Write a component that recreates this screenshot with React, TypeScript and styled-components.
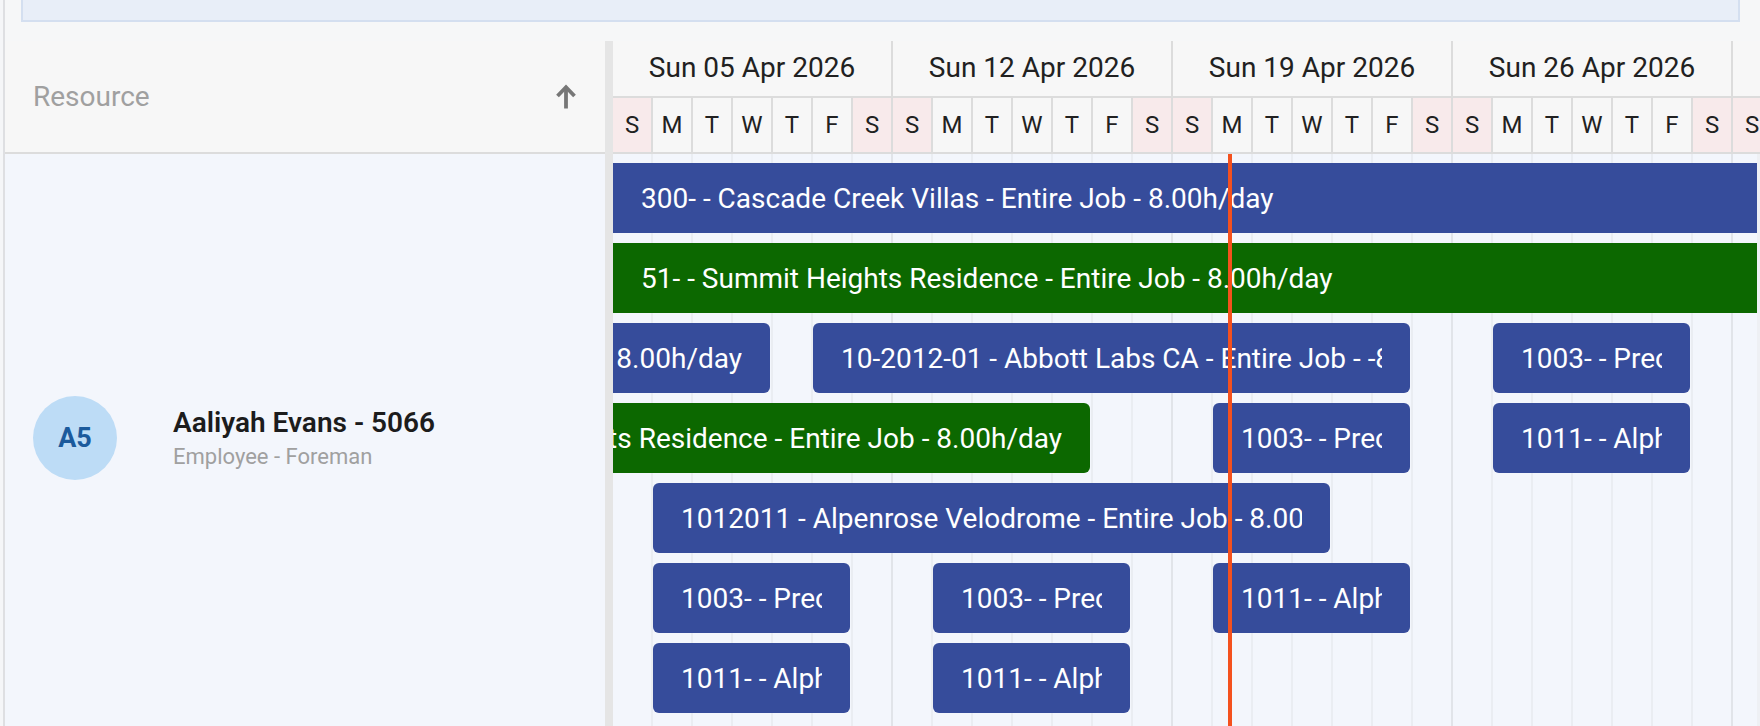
import React from 'react';
import styled, { createGlobalStyle } from 'styled-components';

const DAY_W = 40;
const VISIBLE_DAYS = 29;
const START = new Date(2026, 3, 5); // Sun 05 Apr 2026
const NOW_DAY = 15.38;

const DAY_NAMES = ['Sun', 'Mon', 'Tue', 'Wed', 'Thu', 'Fri', 'Sat'];
const MONTHS = ['Jan', 'Feb', 'Mar', 'Apr', 'May', 'Jun', 'Jul', 'Aug', 'Sep', 'Oct', 'Nov', 'Dec'];

type Bar = {
  from: number;
  to: number;
  label: string;
  color: 'blue' | 'green';
  align?: 'start' | 'end';
};

const PREC = '1003- - Precision Castparts - Entire Job - 8.00h/day';
const ALPH = '1011- - Alpha Tower - Entire Job - 8.00h/day';

const lanes: Bar[][] = [
  [{ from: -20, to: 40, label: '300- - Cascade Creek Villas - Entire Job - 8.00h/day', color: 'blue' }],
  [{ from: -20, to: 40, label: '51- - Summit Heights Residence - Entire Job - 8.00h/day', color: 'green' }],
  [
    { from: -4, to: 4, label: PREC, color: 'blue', align: 'end' },
    { from: 5, to: 20, label: '10-2012-01 - Abbott Labs CA - Entire Job - -8.00h/day', color: 'blue' },
    { from: 22, to: 27, label: PREC, color: 'blue' },
  ],
  [
    { from: -6, to: 12, label: '51- - Summit Heights Residence - Entire Job - 8.00h/day', color: 'green', align: 'end' },
    { from: 15, to: 20, label: PREC, color: 'blue' },
    { from: 22, to: 27, label: ALPH, color: 'blue' },
  ],
  [{ from: 1, to: 18, label: '1012011 - Alpenrose Velodrome - Entire Job - 8.00h/day', color: 'blue' }],
  [
    { from: 1, to: 6, label: PREC, color: 'blue' },
    { from: 8, to: 13, label: PREC, color: 'blue' },
    { from: 15, to: 20, label: ALPH, color: 'blue' },
  ],
  [
    { from: 1, to: 6, label: ALPH, color: 'blue' },
    { from: 8, to: 13, label: ALPH, color: 'blue' },
  ],
];

const GlobalStyle = createGlobalStyle`
  *, *::before, *::after { box-sizing: border-box; }
  html, body { margin: 0; padding: 0; }
  body {
    background: #f5f6f8;
    font-family: Roboto, 'Noto Sans', 'Liberation Sans', sans-serif;
    color: #212121;
    overflow: hidden;
  }
`;

const Frame = styled.div`
  display: flex;
  flex-direction: column;
  width: 1757px;
  height: 726px;
  margin-left: 3px;
  border-left: 2px solid #dedfe2;
  background: #f6f7f8;
  overflow: hidden;
`;

const Banner = styled.div`
  flex: 0 0 22px;
  margin: 0 20px 0 16px;
  background: #e8eef8;
  border: 2px solid #d4dff0;
  border-top: none;
`;

const Scheduler = styled.div`
  display: flex;
  flex: 1;
  min-height: 0;
  margin-top: 19px;
`;

const LeftPane = styled.div`
  display: flex;
  flex: 0 0 600px;
  flex-direction: column;
`;

const LeftHeader = styled.div`
  display: flex;
  flex: 0 0 113px;
  align-items: center;
  justify-content: space-between;
  padding: 0 28px;
  background: #f7f7f7;
  border-bottom: 2px solid #dcdcdc;
`;

const ResourceLabel = styled.span`
  color: #a0a0a0;
  font-size: 28px;
`;

const LeftBody = styled.div`
  flex: 1;
  background: #f3f6fc;
`;

const ResourceRow = styled.div`
  display: flex;
  align-items: center;
  gap: 56px;
  height: 568px;
  padding-left: 28px;
`;

const Avatar = styled.div`
  display: flex;
  flex: 0 0 84px;
  align-items: center;
  justify-content: center;
  height: 84px;
  border-radius: 50%;
  background: #bddcf6;
  color: #1b5a9c;
  font-size: 27px;
  font-weight: 700;
`;

const Info = styled.div`
  display: flex;
  flex-direction: column;
`;

const Name = styled.div`
  color: #1c1c1c;
  font-size: 28px;
  font-weight: 600;
  line-height: 34px;
`;

const Role = styled.div`
  margin-top: 3px;
  color: #a0a0a0;
  font-size: 22px;
  line-height: 28px;
`;

const Splitter = styled.div`
  flex: 0 0 8px;
  background: #e5e5e5;
`;

const TimePane = styled.div`
  display: flex;
  flex: 1;
  flex-direction: column;
  min-width: 0;
  overflow: hidden;
`;

const TimeHeader = styled.div`
  display: flex;
  flex: 0 0 113px;
  flex-direction: column;
  background: #f7f7f7;
  border-bottom: 2px solid #dcdcdc;
`;

const WeekRow = styled.div`
  display: flex;
  flex: 0 0 57px;
  border-bottom: 2px solid #dcdcdc;
`;

const WeekCell = styled.div`
  display: flex;
  flex: 0 0 ${DAY_W * 7}px;
  align-items: center;
  justify-content: center;
  padding-bottom: 2px;
  border-right: 2px solid #dcdcdc;
  font-size: 28px;
  white-space: nowrap;
`;

const DayRow = styled.div`
  display: flex;
  flex: 1;
`;

const DayCell = styled.div<{ $weekend: boolean }>`
  display: flex;
  flex: 0 0 ${DAY_W}px;
  align-items: center;
  justify-content: center;
  border-right: 2px solid #dcdcdc;
  background: ${(p) => (p.$weekend ? '#f8eaeb' : 'transparent')};
  font-size: 24px;
`;

const TimeBody = styled.div`
  position: relative;
  flex: 1;
  padding-top: 9px;
  overflow: hidden;
  border-right: 3px solid #eef0f4;
  background-color: #f3f6fc;
  background-image:
    repeating-linear-gradient(to right, transparent 0 ${DAY_W * 7 - 2}px, #e1e4e9 ${DAY_W * 7 - 2}px ${DAY_W * 7}px),
    repeating-linear-gradient(to right, transparent 0 ${DAY_W - 2}px, #eaedf2 ${DAY_W - 2}px ${DAY_W}px);
`;

const Lane = styled.div`
  position: relative;
  height: 80px;
`;

const BarBox = styled.div<{ $color: 'blue' | 'green'; $cutStart: boolean; $align: 'start' | 'end' }>`
  position: absolute;
  top: 0;
  display: flex;
  align-items: center;
  height: 70px;
  padding: ${(p) => (p.$align === 'end' ? '0 28px 0 0' : '0 28px')};
  border-radius: ${(p) => (p.$cutStart ? '0 6px 6px 0' : '6px')};
  background: ${(p) => (p.$color === 'green' ? '#0c6800' : '#364c9b')};
  color: #fff;
  font-size: 28px;
`;

const BarLabel = styled.div<{ $align: 'start' | 'end' }>`
  display: flex;
  flex: 1;
  justify-content: ${(p) => (p.$align === 'end' ? 'flex-end' : 'flex-start')};
  min-width: 0;
  overflow: hidden;
  white-space: nowrap;
`;

const BarText = styled.span`
  flex-shrink: 0;
`;

const NowLine = styled.div`
  position: absolute;
  top: 0;
  bottom: 0;
  z-index: 2;
  width: 4px;
  background: #f4511e;
`;

const SortArrow = () => (
  <svg width="22" height="27" viewBox="0 0 22 27" fill="none">
    <path d="M11 25.5V5" stroke="#777" strokeWidth="3.8" />
    <path d="M2.5 13L11 4.2L19.5 13" stroke="#777" strokeWidth="3.8" strokeLinejoin="miter" />
  </svg>
);

const pad = (n: number) => String(n).padStart(2, '0');
const addDays = (d: Date, n: number) => new Date(d.getFullYear(), d.getMonth(), d.getDate() + n);
const weekLabel = (d: Date) => `${DAY_NAMES[d.getDay()]} ${pad(d.getDate())} ${MONTHS[d.getMonth()]} ${d.getFullYear()}`;

const ScheduleBar = ({ bar }: { bar: Bar }) => {
  const from = Math.max(bar.from, 0);
  const align = bar.align ?? 'start';
  return (
    <BarBox
      $color={bar.color}
      $cutStart={bar.from < 0}
      $align={align}
      style={{ left: from * DAY_W, width: (bar.to - from) * DAY_W - 3 }}
    >
      <BarLabel $align={align}>
        <BarText>{bar.label}</BarText>
      </BarLabel>
    </BarBox>
  );
};

export default function App() {
  const days = Array.from({ length: VISIBLE_DAYS }, (_, i) => addDays(START, i));
  const weeks = Array.from({ length: Math.ceil(VISIBLE_DAYS / 7) }, (_, i) => addDays(START, i * 7));

  return (
    <>
      <GlobalStyle />
      <Frame>
        <Banner />
        <Scheduler>
          <LeftPane>
            <LeftHeader>
              <ResourceLabel>Resource</ResourceLabel>
              <SortArrow />
            </LeftHeader>
            <LeftBody>
              <ResourceRow>
                <Avatar>A5</Avatar>
                <Info>
                  <Name>Aaliyah Evans - 5066</Name>
                  <Role>Employee - Foreman</Role>
                </Info>
              </ResourceRow>
            </LeftBody>
          </LeftPane>

          <Splitter />

          <TimePane>
            <TimeHeader>
              <WeekRow>
                {weeks.map((w) => (
                  <WeekCell key={w.toISOString()}>{weekLabel(w)}</WeekCell>
                ))}
              </WeekRow>
              <DayRow>
                {days.map((d) => (
                  <DayCell key={d.toISOString()} $weekend={d.getDay() === 0 || d.getDay() === 6}>
                    {DAY_NAMES[d.getDay()][0]}
                  </DayCell>
                ))}
              </DayRow>
            </TimeHeader>

            <TimeBody>
              {lanes.map((lane, i) => (
                <Lane key={i}>
                  {lane.map((bar, j) => (
                    <ScheduleBar key={j} bar={bar} />
                  ))}
                </Lane>
              ))}
              <NowLine style={{ left: NOW_DAY * DAY_W }} />
            </TimeBody>
          </TimePane>
        </Scheduler>
      </Frame>
    </>
  );
}
